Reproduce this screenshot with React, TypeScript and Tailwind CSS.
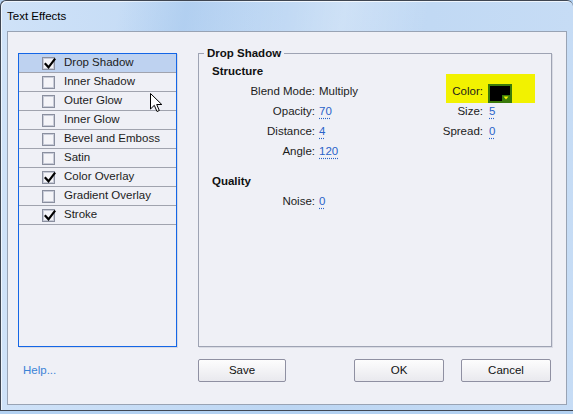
import React from 'react'

const effects = [
  { name: 'Drop Shadow', checked: true, selected: true },
  { name: 'Inner Shadow', checked: false },
  { name: 'Outer Glow', checked: false },
  { name: 'Inner Glow', checked: false },
  { name: 'Bevel and Emboss', checked: false },
  { name: 'Satin', checked: false },
  { name: 'Color Overlay', checked: true },
  { name: 'Gradient Overlay', checked: false },
  { name: 'Stroke', checked: true },
]

function Checkbox({ checked }: { checked: boolean }) {
  return (
    <div className="relative w-[13px] h-[13px] border border-[#8a8f9f] bg-[#f4f4f8] shadow-[inset_0_0_0_1px_#c9ccd8]">
      {checked && (
        <svg className="absolute left-[1px] top-[0px]" width="12" height="12" viewBox="0 0 12 12">
          <path d="M1.5 6 L4.5 9.3 L10.5 1.5" fill="none" stroke="#000" strokeWidth="2.2" strokeLinecap="square" />
        </svg>
      )}
    </div>
  )
}

function Value({ children }: { children: React.ReactNode }) {
  return (
    <span className="text-[#2a63c9] underline decoration-dotted decoration-[#2a63c9] underline-offset-[3px]">
      {children}
    </span>
  )
}

function Row({ label, children }: { label: string; children: React.ReactNode }) {
  return (
    <div className="flex items-center h-[20px]">
      <span className="w-[103px] text-right text-[#1c1c1c]">{label}</span>
      <span className="ml-[4px]">{children}</span>
    </div>
  )
}

function SideRow({ label, children }: { label: string; children: React.ReactNode }) {
  return (
    <div className="flex items-center h-[20px]">
      <span className="w-[43px] text-right text-[#1c1c1c]">{label}</span>
      <span className="ml-[6px]">{children}</span>
    </div>
  )
}

function Button({ children, className = '' }: { children: React.ReactNode; className?: string }) {
  return (
    <div className={`h-[23px] flex items-center justify-center border border-[#8f90a2] rounded-[2px] bg-gradient-to-b from-[#fdfdfd] to-[#e9e9ee] text-[#111] ${className}`}>
      {children}
    </div>
  )
}

export default function App() {
  return (
    <div className="relative w-[573px] h-[414px] bg-[#b3d1f1] overflow-hidden font-['Liberation_Sans',Arial,sans-serif] text-[11.5px]">
      <div className="w-[573px] h-[411px] border border-r-0 border-[#3f4652] rounded-t-[6px] px-[6px] bg-gradient-to-r from-[#cfe2f8] via-[#bcd6f3] to-[#c6dcf5] shadow-[inset_1px_1px_0_#eef5fd]">
        <div className="h-[30px] flex items-center pt-[2px] text-[11.5px] text-black bg-[linear-gradient(100deg,transparent_0%,transparent_20%,rgba(160,196,236,0.5)_32%,transparent_45%,rgba(255,255,255,0.25)_60%,transparent_75%)]">
          Text Effects
        </div>
        <div className="w-[560px] h-[374px] border border-[#98a3b4] bg-[#eff0f6] pl-[10px] pt-[21px]">
          <div className="flex">
            <div className="w-[159px] h-[294px] border border-[#1466e6] bg-[#eff0f6] shadow-[1px_1px_0_#d7dae5]">
              {effects.map(e => (
                <div
                  key={e.name}
                  className={`h-[19px] flex items-center border-b border-[#a0a3ae] ${e.selected ? 'bg-[#bed2f0]' : ''}`}
                >
                  <div className="ml-[23px]">
                    <Checkbox checked={e.checked} />
                  </div>
                  <span className="ml-[9px] text-[#1c1c1c]">{e.name}</span>
                </div>
              ))}
            </div>

            <div className="relative ml-[21px] w-[354px] h-[294px] border border-[#9ea3b3] shadow-[1px_1px_0_#d9dbe4] pt-[8px] pl-[13px] flex">
              <span className="absolute left-[5px] top-[-8px] px-[3px] bg-[#eff0f6] font-bold text-[#111] leading-[14px]">
                Drop Shadow
              </span>
              <div className="w-[228px]">
                <div className="h-[20px] flex items-center font-bold text-[#111]">Structure</div>
                <Row label="Blend Mode:">
                  <span className="text-[#1c1c1c]">Multiply</span>
                </Row>
                <Row label="Opacity:">
                  <Value>70</Value>
                </Row>
                <Row label="Distance:">
                  <Value>4</Value>
                </Row>
                <Row label="Angle:">
                  <Value>120</Value>
                </Row>
                <div className="mt-[10px] h-[20px] flex items-center font-bold text-[#111]">Quality</div>
                <Row label="Noise:">
                  <Value>0</Value>
                </Row>
              </div>
              <div className="pt-[20px]">
                <div className="relative flex items-center h-[20px]">
                  <div className="absolute left-[6px] top-[-8px] w-[89px] h-[29px] bg-[#f2f200]" />
                  <span className="relative w-[43px] text-right text-[#1c1c1c]">Color:</span>
                  <div className="relative ml-[5px] mt-[2px] w-[24px] h-[19px] border-2 border-[#3a7a0a] bg-black">
                    <div className="absolute right-0 bottom-0 w-[8px] h-[6px] bg-[#3a7a0a] flex items-center justify-center">
                      <svg width="6" height="4" viewBox="0 0 6 4">
                        <path d="M0.5 0.5 L5.5 0.5 L3 3.5 Z" fill="#f2f200" />
                      </svg>
                    </div>
                  </div>
                </div>
                <SideRow label="Size:">
                  <Value>5</Value>
                </SideRow>
                <SideRow label="Spread:">
                  <Value>0</Value>
                </SideRow>
              </div>
            </div>
          </div>

          <div className="flex items-center mt-[12px]">
            <div className="w-[180px] pl-[5px] text-[#3b82d6]">Help...</div>
            <Button className="w-[88px]">Save</Button>
            <Button className="ml-[68px] w-[90px]">OK</Button>
            <Button className="ml-[17px] w-[90px]">Cancel</Button>
          </div>
        </div>
      </div>

      <svg className="absolute left-[150px] top-[93px]" width="14" height="20" viewBox="0 0 14 20">
        <path
          d="M0.5 0.5 L0.5 16 L4.3 12.3 L7 18.5 L9.3 17.5 L6.7 11.5 L11.8 11.5 Z"
          fill="#fff"
          stroke="#000"
          strokeWidth="1"
          strokeLinejoin="round"
        />
      </svg>
    </div>
  )
}
